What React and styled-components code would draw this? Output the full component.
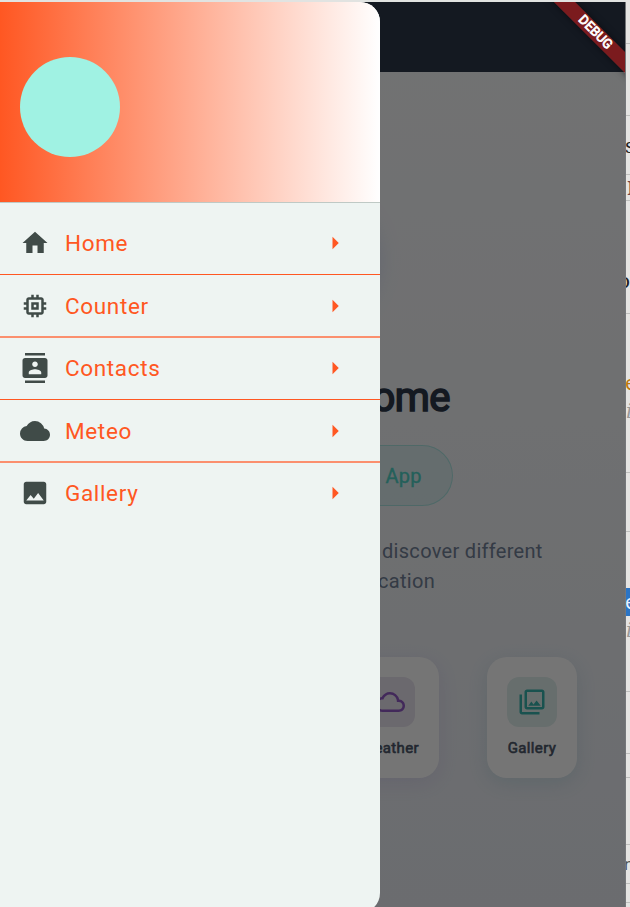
import React from "react";
import styled, { createGlobalStyle, css } from "styled-components";
import {
  MdHome, MdMemory, MdContacts, MdCloud, MdImage, MdArrowRight,
  MdCloudQueue, MdOutlinePhotoLibrary,
} from "react-icons/md";

const Global = createGlobalStyle`
  * { box-sizing: border-box; }
  body { margin: 0; overflow: hidden; font-family: Roboto, sans-serif; }
`;

const Desktop = styled.div`
  width: 630px;
  height: 907px;
  display: grid;
  grid-template-columns: 626px 4px;
  overflow: hidden;
  background: #e1e3e1;
`;

const AppWindow = styled.div`
  position: relative;
  margin-top: 2px;
  height: 905px;
  overflow: hidden;
  border-right: 1px solid #75777a;
`;

const Page = styled.main`
  height: 100%;
  display: flex;
  flex-direction: column;
  background: linear-gradient(180deg, #f8f9fa, #e9ecf2);
`;

const AppBar = styled.header`
  height: 70px;
  flex: none;
  background: #2d3748;
`;

const Content = styled.section`
  display: flex;
  flex-direction: column;
  align-items: flex-start;
`;

const Logo = styled.div`
  width: 130px;
  height: 130px;
  margin: 113px 0 0 248px;
  border-radius: 50%;
  background: #4fd1c5;
  box-shadow: 0 10px 25px rgba(102, 126, 234, 0.2);
`;

const Heading = styled.h1`
  margin: 58px 0 0 372.5px;
  font-size: 40px;
  line-height: 50px;
  font-weight: 400;
  -webkit-text-stroke: 1.6px #2d3748;
  letter-spacing: -0.6px;
  color: #2d3748;
`;

const Pill = styled.div`
  width: 113px;
  height: 61px;
  margin: 22px 0 0 340px;
  padding-left: 44.5px;
  border: 1px solid rgba(79, 209, 197, 0.35);
  border-radius: 31px;
  background: rgba(79, 209, 197, 0.12);
  color: #4fd1c5;
  font-size: 20px;
  font-weight: 400;
  -webkit-text-stroke: 0.35px #4fd1c5;
  letter-spacing: 0.2px;
  line-height: 61px;
`;

const Blurb = styled.p`
  margin: 30px 0 0 382px;
  font-size: 20px;
  line-height: 30px;
  letter-spacing: 0.3px;
  color: #718096;
  white-space: nowrap;
`;

const BlurbTail = styled.span`
  display: block;
  margin-left: -4px;
`;

const Cards = styled.div`
  display: flex;
  gap: 48px;
  margin: 61px 0 0 341px;
`;

const Card = styled.article`
  width: ${(p) => p.$width}px;
  height: 121px;
  padding-top: 20px;
  display: flex;
  flex-direction: column;
  align-items: center;
  border-radius: 20px;
  background: #fff;
  box-shadow: 0 5px 19px ${(p) => p.$glow};
`;

const Tile = styled.div`
  width: 50px;
  height: 50px;
  display: grid;
  place-items: center;
  border-radius: 12px;
  color: ${(p) => p.$color};
  background: ${(p) => p.$tint};
  svg { width: 30px; height: 30px; }
`;

const CardLabel = styled.span`
  margin-top: 12px;
  font-size: 15px;
  line-height: 18px;
  font-weight: 400;
  -webkit-text-stroke: 0.6px #4a5568;
  letter-spacing: 0.35px;
  color: #4a5568;
`;

const Scrim = styled.div`
  position: absolute;
  inset: 0;
  background: rgba(0, 0, 0, 0.54);
`;

const Drawer = styled.nav`
  position: absolute;
  left: 0;
  top: 0;
  width: 380px;
  height: 911px;
  overflow: hidden;
  border-radius: 0 20px 20px 0;
  background: #eef4f2;
`;

const DrawerHeader = styled.div`
  height: 201px;
  padding: 55px 20px 0;
  border-bottom: 1px solid #bfc9c5;
  background: linear-gradient(90deg, #ff5722, #fff) padding-box;
`;

const Avatar = styled.div`
  width: 100px;
  height: 100px;
  border-radius: 50%;
  background: #a0f2e3;
`;

const Menu = styled.ul`
  margin: 0;
  padding: 9px 0 0;
  list-style: none;
`;

const MenuItem = styled.li`
  height: ${(p) => p.$height}px;
  padding: ${(p) => p.$inset}px 30px 0 20px;
  display: flex;
  align-items: flex-start;
  ${(p) => p.$line && css`border-bottom: ${p.$line};`}
`;

const ItemIcon = styled.span`
  width: 30px;
  height: 30px;
  color: #404b48;
  svg { display: block; width: 30px; height: 30px; }
`;

const ItemText = styled.span`
  flex: 1;
  margin-left: 15px;
  font-size: 22.5px;
  line-height: 30px;
  letter-spacing: 0.65px;
  color: #ff5722;
`;

const ItemArrow = styled(ItemIcon)`
  color: #ff5722;
`;

const BannerCorner = styled.div`
  position: absolute;
  top: 0;
  right: 0;
  width: 90px;
  height: 90px;
  overflow: hidden;
`;

const Banner = styled.div`
  position: absolute;
  left: -7px;
  top: 21px;
  width: 130px;
  height: 15px;
  padding-left: 6px;
  transform: rotate(45deg);
  background: rgba(183, 28, 28, 0.63);
  box-shadow: 0 0 7px rgba(0, 0, 0, 0.5);
  color: #fff;
  font-size: 13px;
  line-height: 14px;
  font-weight: 400;
  -webkit-text-stroke: 0.8px #fff;
  letter-spacing: 0.1px;
  text-align: center;
`;

const Editor = styled.aside`
  display: flex;
  flex-direction: column;
  overflow: hidden;
  background: #e5e4e2;
`;

const Line = styled.div`
  flex: none;
  height: ${(p) => p.$height}px;
  display: flex;
  align-items: flex-end;
  overflow: hidden;
  border-bottom: 1px solid #bfbfbd;
`;

const Glyph = styled.span`
  height: 28px;
  width: 4px;
  margin-bottom: ${(p) => p.$lift}px;
  overflow: hidden;
  flex: none;
  text-indent: ${(p) => p.$shift || 0}px;
  color: ${(p) => p.$color || "#222"};
  background: ${(p) => p.$bg || "transparent"};
  font: ${(p) => p.$font || '20px/28px "Noto Sans"'};
`;

const Stack = styled.div`
  display: flex;
  flex-direction: column;
`;

const thin = "1px solid #ff5722";
const thick = "2px solid #fb8f6e";

const items = [
  { label: "Home", Icon: MdHome, height: 63, inset: 16.25, line: thin },
  { label: "Counter", Icon: MdMemory, height: 63, inset: 16, line: thick },
  { label: "Contacts", Icon: MdContacts, height: 62, inset: 15.25, line: thin },
  { label: "Meteo", Icon: MdCloud, height: 63, inset: 16, line: thick },
  { label: "Gallery", Icon: MdImage, height: 62, inset: 15, line: null },
];

const serif = '20px/28px "DejaVu Serif"';
const italic = 'italic 20px/28px "DejaVu Serif"';

export default function App() {
  return (
    <Desktop>
      <Global />
      <AppWindow>
        <Page>
          <AppBar />
          <Content>
            <Logo />
            <Heading>ome</Heading>
            <Pill>App</Pill>
            <Blurb>
              discover different
              <BlurbTail>cation</BlurbTail>
            </Blurb>
            <Cards>
              <Card $width={98} $glow="rgba(128, 100, 213, 0.14)">
                <Tile $color="#9159c4" $tint="#e9e4ef"><MdCloudQueue /></Tile>
                <CardLabel>Weather</CardLabel>
              </Card>
              <Card $width={90} $glow="rgba(56, 150, 172, 0.16)">
                <Tile $color="#38b2ac" $tint="#e1f0ee"><MdOutlinePhotoLibrary /></Tile>
                <CardLabel>Gallery</CardLabel>
              </Card>
            </Cards>
          </Content>
        </Page>
        <Scrim />
        <Drawer>
          <DrawerHeader><Avatar /></DrawerHeader>
          <Menu>
            {items.map(({ label, Icon, height, inset, line }) => (
              <MenuItem key={label} $height={height} $inset={inset} $line={line}>
                <ItemIcon><Icon /></ItemIcon>
                <ItemText>{label}</ItemText>
                <ItemArrow><MdArrowRight /></ItemArrow>
              </MenuItem>
            ))}
          </Menu>
        </Drawer>
        <BannerCorner><Banner>DEBUG</Banner></BannerCorner>
      </AppWindow>
      <Editor>
        <Line $height={44} />
        <Line $height={72} />
        <Line $height={59}><Glyph $lift={14} $shift={-1} $font={serif}>s</Glyph></Line>
        <Line $height={26}><Glyph $lift={-2} $color="#744" $shift={1}>I</Glyph></Line>
        <Line $height={113}><Glyph $lift={18} $shift={-8} $font={serif}>o</Glyph></Line>
        <Line $height={159}>
          <Stack>
            <Glyph $lift={0} $shift={-1} $color="#bd780b">e</Glyph>
            <Glyph $lift={47} $color="#999" $font={italic}>i</Glyph>
          </Stack>
        </Line>
        <Line $height={59} />
        <Line $height={160}>
          <Stack>
            <Glyph $lift={0} $shift={-1} $color="#e8f2ff" $bg="#2a74c5">e</Glyph>
            <Glyph $lift={47} $color="#999" $font={italic}>i</Glyph>
          </Stack>
        </Line>
        <Line $height={62} />
        <Line $height={24} />
        <Line $height={67} />
        <Line $height={39}><Glyph $lift={5} $shift={-2} $color="#555" $font='16px/28px "Noto Sans"'>n</Glyph></Line>
        <Line $height={19} />
      </Editor>
    </Desktop>
  );
}
